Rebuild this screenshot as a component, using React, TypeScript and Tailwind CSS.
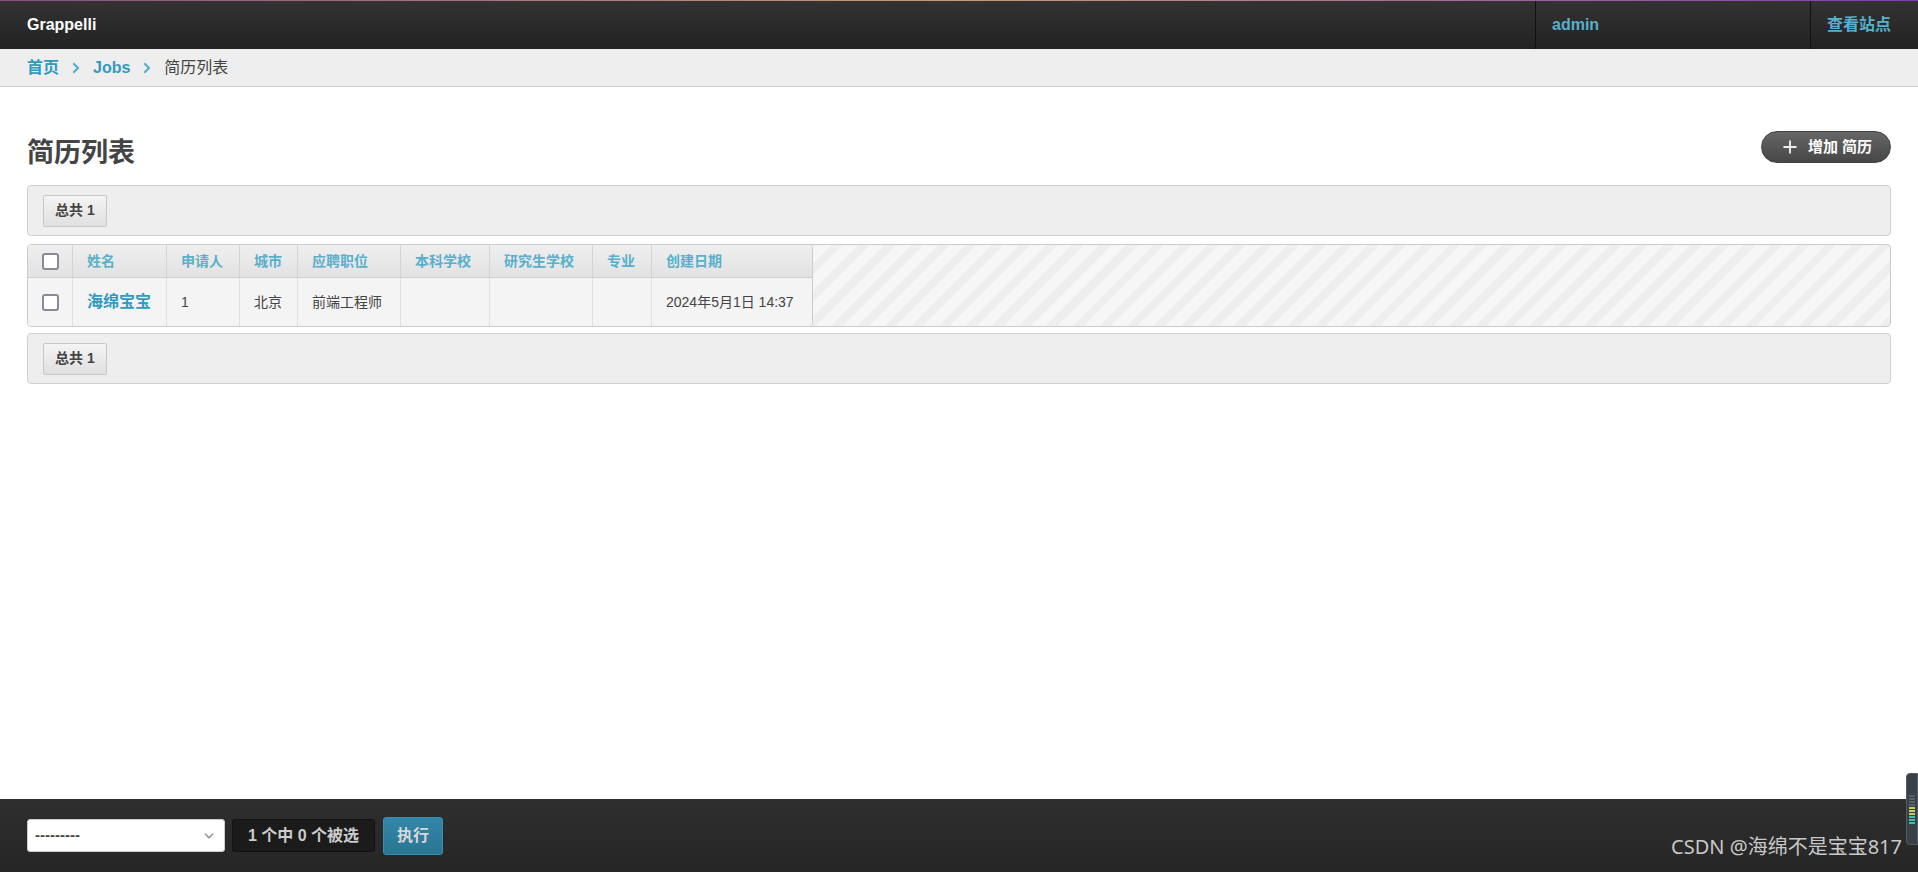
import { ChevronRight, ChevronDown, Plus } from "lucide-react";

const columns = [
  { label: "姓名", w: "w-[94px]" },
  { label: "申请人", w: "w-[73px]" },
  { label: "城市", w: "w-[58px]" },
  { label: "应聘职位", w: "w-[103px]" },
  { label: "本科学校", w: "w-[89px]" },
  { label: "研究生学校", w: "w-[103px]" },
  { label: "专业", w: "w-[59px]" },
  { label: "创建日期", w: "w-[160px]" },
];

const row = ["海绵宝宝", "1", "北京", "前端工程师", "", "", "", "2024年5月1日 14:37"];

function Checkbox() {
  return <div className="w-[17px] h-[17px] rounded-[3px] border-2 border-[#8a8a96] bg-white" />;
}

function Paginator() {
  return (
    <div className="h-[51px] flex items-center px-[15px] bg-[#eeeeee] border border-[#d0d0d0] rounded-[4px]">
      <div className="h-[32px] px-[11px] flex items-center text-[14px] font-bold text-[#444] border border-[#c8c8c8] rounded-[2px] bg-linear-to-b from-[#f4f4f4] to-[#e0e0e0]">
        总共 1
      </div>
    </div>
  );
}

export default function App() {
  return (
    <div className="relative h-screen flex flex-col bg-white text-[#444] font-['Liberation_Sans','Noto_Sans_CJK_SC',sans-serif] overflow-hidden">
      {/* header */}
      <div className="h-[49px] shrink-0 relative flex items-stretch bg-linear-to-b from-[#333333] to-[#222222]">
        <div className="absolute top-0 left-0 right-0 h-[1px] bg-linear-to-r from-[#8a4f80] via-[#c49a78] to-[#7a40a8]" />
        <div className="flex-1 flex items-center pl-[27px] text-[16px] font-bold text-white">Grappelli</div>
        <div className="w-[275px] flex items-center pl-[16px] border-l border-[#111] text-[16px] font-bold text-[#59afcc]">admin</div>
        <div className="flex items-center pl-[16px] pr-[27px] border-l border-[#111] text-[16px] font-bold text-[#59afcc]">查看站点</div>
      </div>

      {/* breadcrumb */}
      <div className="h-[38px] shrink-0 flex items-center gap-[9px] pl-[27px] bg-[#eeeeee] border-b border-[#cccccc] text-[16px]">
        <span className="font-bold text-[#309bbf]">首页</span>
        <ChevronRight size={16} strokeWidth={3.5} className="text-[#59afcc]" />
        <span className="font-bold text-[#309bbf]">Jobs</span>
        <ChevronRight size={16} strokeWidth={3.5} className="text-[#59afcc]" />
        <span className="text-[#444]">简历列表</span>
      </div>

      {/* content */}
      <div className="flex-1 px-[27px] pt-[44px]">
        <div className="flex items-start justify-between mb-[17px]">
          <h1 className="mt-[7px] text-[27px] leading-[30px] font-bold text-[#444]">简历列表</h1>
          <div className="h-[32px] w-[130px] flex items-center justify-center gap-[8px] rounded-full border border-[#444] bg-linear-to-b from-[#666666] to-[#474747] text-white text-[15px] font-bold">
            <Plus size={20} strokeWidth={2.25} className="text-[#eee]" />
            <span>增加 简历</span>
          </div>
        </div>

        <Paginator />

        <div className="mt-[8px] mb-[6px] flex border border-[#cccccc] rounded-[4px] bg-[repeating-linear-gradient(-45deg,#eeeeee_0px,#eeeeee_8px,#f6f6f6_8px,#f6f6f6_19px)] overflow-hidden">
          <div className="border-r border-[#cccccc] rounded-r-[4px] overflow-hidden bg-[#f4f4f4]">
            <div className="flex h-[33px] border-b border-[#d0d0d0] bg-linear-to-b from-[#efefef] to-[#e2e2e2]">
              <div className="w-[45px] flex items-center justify-center border-r border-[#d4d4d4]">
                <Checkbox />
              </div>
              {columns.map((c, i) => (
                <div
                  key={c.label}
                  className={`${c.w} flex items-center pl-[14px] text-[14px] font-bold text-[#59afcc] ${i < columns.length - 1 ? "border-r border-[#d4d4d4]" : ""}`}
                >
                  {c.label}
                </div>
              ))}
            </div>
            <div className="flex h-[48px]">
              <div className="w-[45px] flex items-center justify-center border-r border-[#e0e0e0]">
                <Checkbox />
              </div>
              {columns.map((c, i) => (
                <div
                  key={c.label}
                  className={`${c.w} flex items-center pl-[14px] ${i === 0 ? "text-[16px] font-bold text-[#309bbf]" : "text-[14px] text-[#444]"} ${i < columns.length - 1 ? "border-r border-[#e0e0e0]" : ""}`}
                >
                  {row[i]}
                </div>
              ))}
            </div>
          </div>
        </div>

        <Paginator />
      </div>

      {/* footer actions */}
      <div className="h-[73px] shrink-0 flex items-center gap-[7px] px-[27px] bg-linear-to-b from-[#2e2e2e] to-[#262626]">
        <div className="w-[198px] h-[33px] flex items-center justify-between pl-[7px] pr-[8px] bg-white border border-[#ccc] rounded-[3px]">
          <span className="text-[15px] font-bold text-[#444]">---------</span>
          <ChevronDown size={14} strokeWidth={3} className="text-[#999]" />
        </div>
        <div className="w-[143px] h-[33px] flex items-center justify-center bg-[#1b1b1b] border border-[#111] rounded-[3px] text-[16px] font-bold text-[#cccccc]">
          1 个中 0 个被选
        </div>
        <div className="ml-[1px] w-[60px] h-[38px] flex items-center justify-center rounded-[3px] border border-[#3a8eae] bg-linear-to-b from-[#3387a6] to-[#2a7594] text-[16px] font-bold text-[#d8d8d8]">
          执行
        </div>
      </div>

      {/* watermark */}
      <div className="absolute right-[16px] bottom-[10px] text-[20px] text-[#c8c8c8] font-['Noto_Sans','Noto_Sans_CJK_SC',sans-serif]">
        CSDN @海绵不是宝宝817
      </div>

      {/* side widget */}
      <div className="absolute right-0 top-[773px] w-[12px] h-[72px] rounded-l-[4px] bg-[#3a4048] border border-[#555c66] flex flex-col items-center justify-center gap-[1px] py-[4px]">
        {Array.from({ length: 10 }).map((_, i) => (
          <div key={i} className={`w-[6px] h-[2px] ${i < 4 ? "bg-[#556070]" : i < 7 ? "bg-[#c8c860]" : "bg-[#40c0a0]"}`} />
        ))}
      </div>
    </div>
  );
}
